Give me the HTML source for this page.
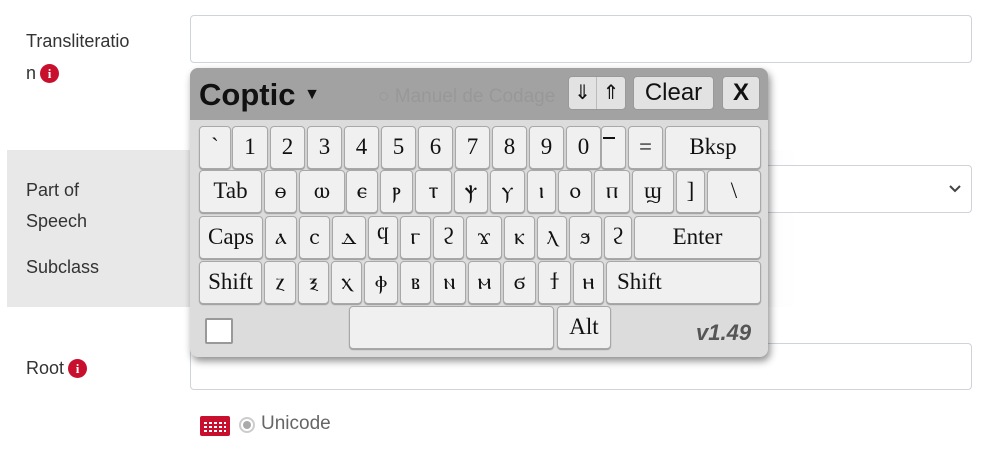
<!DOCTYPE html>
<html><head><meta charset="utf-8"><style>
*{box-sizing:border-box;margin:0;padding:0}
body{width:987px;height:456px;position:relative;overflow:hidden;background:#fff;font-family:"Liberation Sans",sans-serif;color:#212529}
.a{position:absolute}
.lbl{font-size:18px;color:#333}
.inp{border:1px solid #ced4da;border-radius:4px;background:#fff}
.info{display:inline-block;width:19px;height:19px;border-radius:50%;background:#c8102e;color:#fff;font:bold 13px/19px "Liberation Serif",serif;text-align:center;vertical-align:1px;margin-left:4px}
.kb{left:190px;top:68px;width:578px;height:289px;background:#dcdcdc;border-radius:8px;box-shadow:2px 4px 8px rgba(0,0,0,.45);overflow:hidden}
.hd{left:0;top:0;width:578px;height:52px;background:#a2a2a2}
.k{position:absolute;background:#f0f0f0;border:1px solid #a8a8a8;border-radius:4px;box-shadow:0 1px 1px #999;font:23px/40px "Liberation Serif","DejaVu Serif",serif;text-align:center;color:#111}
.hb{position:absolute;background:#e2e2e2;border:1px solid #999;border-radius:4px;font:24px/32px "Liberation Sans",sans-serif;text-align:center;color:#111}
</style></head><body>
<div class="a lbl" style="left:26px;top:25px;line-height:32px">Transliteratio<br>n<span class="info">i</span></div>
<div class="a inp" style="left:190px;top:15px;width:782px;height:48px"></div>
<div class="a" style="left:7px;top:150px;width:900px;height:157px;background:linear-gradient(90deg,#e8e8e8 0,#e8e8e8 600px,#fff 790px)"></div>
<div class="a lbl" style="left:26px;top:175px;line-height:31px">Part of<br>Speech</div>
<div class="a lbl" style="left:26px;top:254px;line-height:26px">Subclass</div>
<div class="a inp" style="left:190px;top:165px;width:782px;height:48px"><svg class="a" style="right:10px;top:19px" width="12" height="8" viewBox="0 0 12 8"><path d="M1 1l5 5 5-5" fill="none" stroke="#444" stroke-width="2"/></svg></div>
<div class="a lbl" style="left:26px;top:355px;line-height:26px">Root<span class="info">i</span></div>
<div class="a inp" style="left:190px;top:343px;width:782px;height:47px"></div>
<div class="a" style="left:200px;top:416px;width:30px;height:20px;background:#c8102e;border-radius:2px"><div style="margin:4px 4px;height:12px;background:repeating-linear-gradient(90deg,#fff 0 3px,transparent 3px 5px);-webkit-mask:repeating-linear-gradient(0deg,#000 0 2px,transparent 2px 4px)"></div></div>
<div class="a" style="left:239px;top:417px;width:16px;height:16px;border-radius:50%;border:2px solid #ccc;background:#fff"><div style="margin:2px;width:8px;height:8px;border-radius:50%;background:#aaa"></div></div>
<div class="a" style="left:261px;top:413px;font-size:19px;color:#666">Unicode</div>
<div class="a kb">
<div class="a hd"></div>
<div class="a" style="left:66px;top:18px;font-size:19px;color:#989898">Unicode</div>
<div class="a" style="left:188px;top:18px;font-size:19px;color:#989898">&#9675; Manuel de Codage</div>
<div class="a" style="left:9px;top:9px;font:bold 31px/36px 'Liberation Sans',sans-serif;color:#111;background:#a2a2a2;padding-right:14px">Coptic <span style="font-size:16px;vertical-align:6px">&#9660;</span></div>
<div class="hb" style="left:378px;top:8px;width:58px;height:34px;font-size:20px"><span style="display:inline-block;width:28px;border-right:1px solid #bbb">&#8659;</span><span style="display:inline-block;width:28px">&#8657;</span></div>
<div class="hb" style="left:443px;top:8px;width:81px;height:34px">Clear</div>
<div class="hb" style="left:532px;top:8px;width:38px;height:34px;font-weight:bold">X</div>
</div>
<div class="a" style="left:190px;top:68px;width:578px;height:289px">
<div class="k" style="left:9px;top:58px;width:32px;height:43px">`</div>
<div class="k" style="left:42px;top:58px;width:36px;height:43px">1</div>
<div class="k" style="left:80px;top:58px;width:35px;height:43px">2</div>
<div class="k" style="left:117px;top:58px;width:35px;height:43px">3</div>
<div class="k" style="left:154px;top:58px;width:35px;height:43px">4</div>
<div class="k" style="left:191px;top:58px;width:35px;height:43px">5</div>
<div class="k" style="left:228px;top:58px;width:35px;height:43px">6</div>
<div class="k" style="left:265px;top:58px;width:35px;height:43px">7</div>
<div class="k" style="left:302px;top:58px;width:35px;height:43px">8</div>
<div class="k" style="left:339px;top:58px;width:35px;height:43px">9</div>
<div class="k" style="left:376px;top:58px;width:35px;height:43px">0</div>
<div class="k" style="left:411px;top:58px;width:25px;height:43px"><div class="a" style="left:1px;top:10px;width:12px;height:2px;background:#111"></div></div>
<div class="k" style="left:438px;top:58px;width:35px;height:43px">=</div>
<div class="k" style="left:475px;top:58px;width:96px;height:43px">Bksp</div>
<div class="k" style="left:9px;top:102px;width:63px;height:43px">Tab</div>
<div class="k" style="left:74px;top:102px;width:33px;height:43px">ⲑ</div>
<div class="k" style="left:109px;top:102px;width:46px;height:43px">ⲱ</div>
<div class="k" style="left:156px;top:102px;width:32px;height:43px">ⲉ</div>
<div class="k" style="left:190px;top:102px;width:33px;height:43px">ⲣ</div>
<div class="k" style="left:225px;top:102px;width:37px;height:43px">ⲧ</div>
<div class="k" style="left:264px;top:102px;width:34px;height:43px">ⲯ</div>
<div class="k" style="left:300px;top:102px;width:35px;height:43px">ⲩ</div>
<div class="k" style="left:337px;top:102px;width:29px;height:43px">ⲓ</div>
<div class="k" style="left:368px;top:102px;width:34px;height:43px">ⲟ</div>
<div class="k" style="left:404px;top:102px;width:36px;height:43px">ⲡ</div>
<div class="k" style="left:442px;top:102px;width:42px;height:43px">ϣ</div>
<div class="k" style="left:486px;top:102px;width:29px;height:43px">]</div>
<div class="k" style="left:517px;top:102px;width:54px;height:43px">\</div>
<div class="k" style="left:9px;top:148px;width:64px;height:43px">Caps</div>
<div class="k" style="left:75px;top:148px;width:32px;height:43px">ⲁ</div>
<div class="k" style="left:109px;top:148px;width:31px;height:43px">ⲥ</div>
<div class="k" style="left:142px;top:148px;width:34px;height:43px">ⲇ</div>
<div class="k" style="left:178px;top:148px;width:30px;height:43px">ϥ</div>
<div class="k" style="left:210px;top:148px;width:31px;height:43px">ⲅ</div>
<div class="k" style="left:243px;top:148px;width:31px;height:43px">ϩ</div>
<div class="k" style="left:276px;top:148px;width:36px;height:43px">ϫ</div>
<div class="k" style="left:314px;top:148px;width:31px;height:43px">ⲕ</div>
<div class="k" style="left:347px;top:148px;width:30px;height:43px">ⲗ</div>
<div class="k" style="left:379px;top:148px;width:33px;height:43px">ϧ</div>
<div class="k" style="left:414px;top:148px;width:28px;height:43px">ϩ</div>
<div class="k" style="left:444px;top:148px;width:127px;height:43px">Enter</div>
<div class="k" style="left:9px;top:193px;width:63px;height:43px">Shift</div>
<div class="k" style="left:74px;top:193px;width:32px;height:43px">ⲍ</div>
<div class="k" style="left:108px;top:193px;width:31px;height:43px">ⲝ</div>
<div class="k" style="left:141px;top:193px;width:31px;height:43px">ⲭ</div>
<div class="k" style="left:174px;top:193px;width:34px;height:43px">ⲫ</div>
<div class="k" style="left:210px;top:193px;width:31px;height:43px">ⲃ</div>
<div class="k" style="left:243px;top:193px;width:33px;height:43px">ⲛ</div>
<div class="k" style="left:278px;top:193px;width:33px;height:43px">ⲙ</div>
<div class="k" style="left:313px;top:193px;width:33px;height:43px">ϭ</div>
<div class="k" style="left:348px;top:193px;width:33px;height:43px">ϯ</div>
<div class="k" style="left:383px;top:193px;width:31px;height:43px">ⲏ</div>
<div class="k" style="left:416px;top:193px;width:155px;height:43px;text-align:left;padding-left:10px">Shift</div>
<div class="a" style="left:15px;top:250px;width:28px;height:26px;background:#fff;border:2px solid #999;border-radius:2px"></div>
<div class="k" style="left:159px;top:238px;width:205px;height:43px"></div>
<div class="k" style="left:367px;top:238px;width:54px;height:43px">Alt</div>
<div class="a" style="left:506px;top:252px;font:italic bold 22px 'Liberation Sans',sans-serif;color:#555">v1.49</div>
</div>
</body></html>
